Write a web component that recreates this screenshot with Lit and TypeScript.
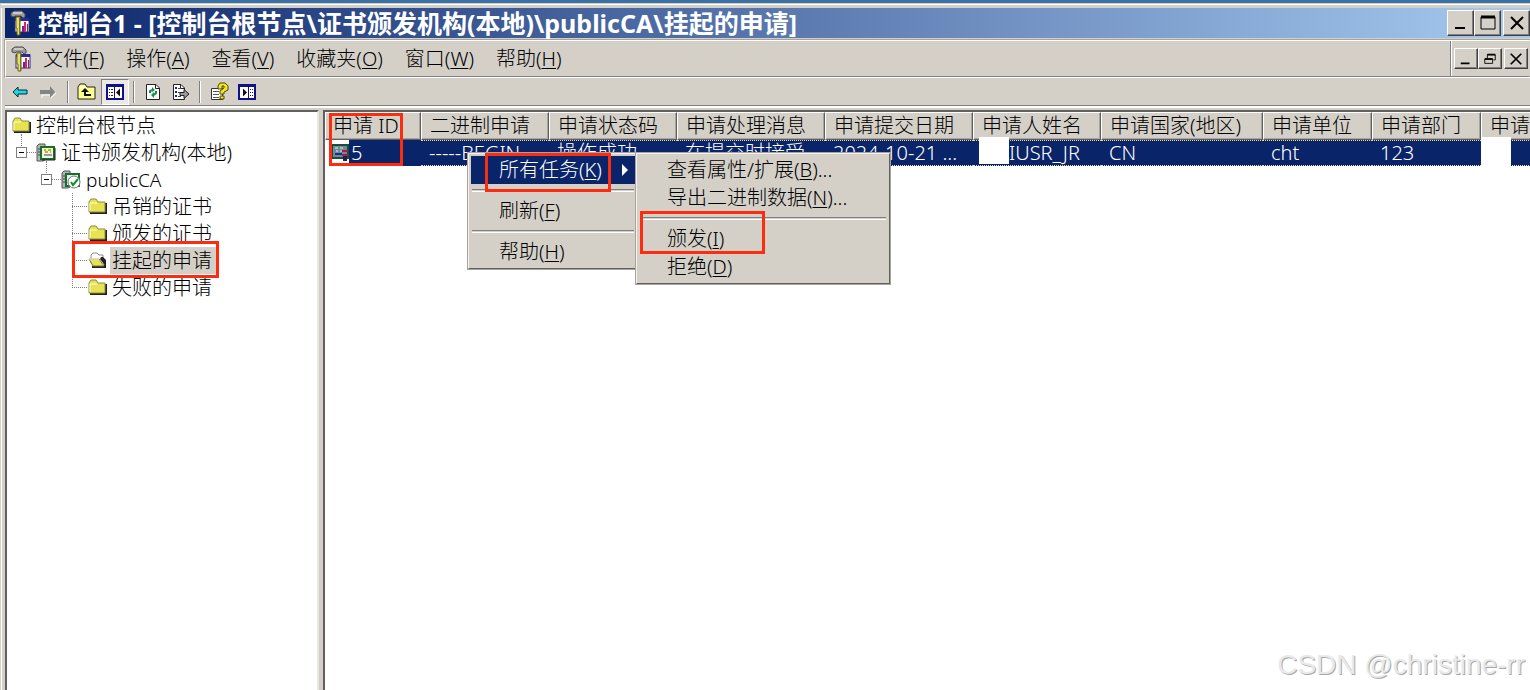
import { LitElement, html, css, svg, nothing } from "lit";
import { customElement, property } from "lit/decorators.js";

const icon = (w: number, h: number, body: unknown) => html`
  <svg class="icon" width=${w} height=${h} viewBox="0 0 ${w} ${h}" aria-hidden="true">${body}</svg>
`;

const consoleIcon = () => icon(20, 26, svg`
  <rect x="5" y="9" width="14" height="13" fill="#fff" stroke="#2a2a6c"/>
  <rect x="5" y="8" width="14" height="3" fill="#2a2a9c"/>
  <path d="M12 16h2v6h-2zM17 14h1v8h-1z" fill="#7a1f9c"/>
  <path d="M14 12h2v10h-2z" fill="#d22a5c"/>
  <path d="M6 7h4v18H7V18H6z" fill="#e8e060" stroke="#66641c"/>
  <path d="M9 8h1v17H9z" fill="#77752c"/>
  <path d="M1 3L4 1H12L15 4V7L13 8L11 6H5L4 7L1 6Z" fill="#9c9c9c" stroke="#4e4e4e"/>
  <path d="M3 3h9" stroke="#f8f8f8"/>
`);

const backIcon = () => icon(16, 12, svg`
  <path d="M1 6L6 1V4H15V8H6V11Z" fill="#1fd6de" stroke="#062a3c"/>
`);

const forwardIcon = () => icon(16, 12, svg`
  <path d="M16 7L11 12V9H2V13" fill="none" stroke="#fff"/>
  <path d="M15 6L10 0V4H0V8H10V12Z" fill="#848484"/>
`);

const upFolderIcon = () => icon(20, 18, svg`
  <path d="M1 16V4L3 1H8L10 4H18V16Z" fill="#ffff8c" stroke="#222"/>
  <path d="M2 4H9" stroke="#fff"/>
  <path d="M8 8V12H14" fill="none" stroke="#111" stroke-width="2"/>
  <path d="M4 9L8 5L12 9Z" fill="#111"/>
`);

const paneFrame = svg`
  <rect x="1" y="1" width="16" height="14" fill="#fff" stroke="#10108c" stroke-width="2"/>
  <path d="M1 2H17" stroke="#10108c" stroke-width="2"/>
`;

const treePaneIcon = () => icon(18, 16, svg`
  ${paneFrame}
  <path d="M8.500 3V14" stroke="#10108c"/>
  <path d="M3 5.500h1M5 5.500h2M3 8.500h1M5 8.500h2M3 11.500h1M5 11.500h2" stroke="#222"/>
  <path d="M10 8.500L14 4.500V12.500Z" fill="#111"/>
`);

const actionPaneIcon = () => icon(18, 16, svg`
  ${paneFrame}
  <path d="M10.500 3V14" stroke="#10108c"/>
  <path d="M12 5.500h1M14 5.500h1M12 8.500h1M14 8.500h1M12 11.500h1M14 11.500h1" stroke="#222"/>
  <path d="M9 8.500L5 4.500V12.500Z" fill="#111"/>
`);

const refreshIcon = () => icon(16, 18, svg`
  <path d="M1.500 1.500H11L14.500 5V16.500H1.500Z" fill="#fff" stroke="#222"/>
  <path d="M10.500 1.500V5.500H14.500" fill="none" stroke="#222"/>
  <path d="M5 10V8L7 7M11 8V10L9 12" fill="none" stroke="#16904c" stroke-width="2"/>
  <path d="M7 4L10 7L7 9ZM9 9L6 12L9 15Z" fill="#16904c"/>
`);

const exportIcon = () => icon(18, 18, svg`
  <path d="M1.500 1.500H9L12.500 5V16.500H1.500Z" fill="#fff" stroke="#222"/>
  <path d="M8.500 1.500V5.500H12.500" fill="none" stroke="#222"/>
  <path d="M3 5h2M3 9h2M3 13h2" stroke="#2020a0" stroke-width="2"/>
  <path d="M6 5.500h2M6 9.500h3M6 13.500h3" stroke="#444"/>
  <path d="M8 9.500H12V6.500L17 11L12 15.500V12.500H8Z" fill="#9a9a9a" stroke="#222"/>
`);

const helpIcon = () => icon(19, 20, svg`
  <path d="M1.500 6.500H12.500V17.500H1.500Z" fill="#fff" stroke="#333"/>
  <path d="M3 9.500h6M3 12.500h6M3 15.500h6" stroke="#555"/>
  <path d="M8 7V4L10 1H15L18 4V8L14 10V12H10V9L14 6V4H12V7Z" fill="#f2e61c" stroke="#4e4a08"/>
  <path d="M10 14h4v3h-4z" fill="#f2e61c" stroke="#4e4a08"/>
`);

const folderIcon = () => icon(19, 17, svg`
  <path d="M2 15H18V5" fill="none" stroke="#222" stroke-width="2"/>
  <path d="M1 14V4L3 1H8L10 4H17V14Z" fill="#e6e252" stroke="#8c8a48"/>
  <path d="M2 13V5H9" fill="none" stroke="#ffffd0"/>
`);

const openFolderIcon = () => icon(19, 17, svg`
  <path d="M3 11V3L5 1H9L11 3H15V7" fill="#fff" stroke="#8c8c8c"/>
  <path d="M4 15H17V13" fill="none" stroke="#222" stroke-width="2"/>
  <path d="M1 7H11L16 14H5Z" fill="#e6e252" stroke="#77753c"/>
  <path d="M1 7H11" stroke="#fff"/>
  <path d="M13 5H15L18 8V15L12 7Z" fill="#222"/>
`);

const server = svg`
  <path d="M1 3L3 1H9V17L7 18H1Z" fill="#b4b4b4" stroke="#555"/>
  <path d="M2 6h4M2 9h4M2 12h4" stroke="#444"/>
`;

const authorityIcon = () => icon(20, 19, svg`
  ${server}
  <rect x="5" y="4" width="13" height="12" fill="#f4f4d8" stroke="#14702c" stroke-width="2"/>
  <path d="M8 7h2M12 7h3M9 9h3M14 9h1" stroke="#c8b414" stroke-width="2"/>
  <path d="M8 12h8" stroke="#2040b0"/>
  <path d="M19 5V17H6" fill="none" stroke="#222"/>
`);

const publicCaIcon = () => icon(20, 20, svg`
  ${server}
  <rect x="5" y="4" width="13" height="12" fill="#e8f0e8" stroke="#14702c" stroke-width="2"/>
  <circle cx="13" cy="12" r="6" fill="#fff" stroke="#777"/>
  <path d="M10 12L12 15L17 9" fill="none" stroke="#109030" stroke-width="2"/>
`);

const requestIcon = () => icon(18, 18, svg`
  <rect x="1" y="1" width="16" height="13" fill="#6c8c98" stroke="#1c4c3c" stroke-width="2"/>
  <path d="M4 4h3M9 4h3M5 7h2M9 7h2" stroke="#e8e8f4"/>
  <path d="M4 10h7" stroke="#28288c" stroke-width="2"/>
  <path d="M11 7h6M11 11h6" stroke="#a81c4c" stroke-width="2"/>
  <path d="M12 12h4v5h-4z" fill="#20204c"/>
`);

const glyphs: Record<string, unknown> = {
  minimize: svg`<path d="M2 13h10" stroke="#000" stroke-width="2"/>`,
  maximize: svg`<path d="M1 2h14v12H1z" fill="none" stroke="#000"/><path d="M1 2h14" stroke="#000" stroke-width="3"/>`,
  restore: svg`<path d="M5 7V3h9v6h-2" fill="none" stroke="#000"/><path d="M5 3h9" stroke="#000" stroke-width="2"/>
    <path d="M2 8h9v5H2z" fill="none" stroke="#000"/><path d="M2 8h9" stroke="#000" stroke-width="2"/>`,
  close: svg`<path d="M2 2L14 14M14 2L2 14" stroke="#000" stroke-width="2"/>`,
};

/** A classic raised caption button: minimise, maximise, restore or close. */
@customElement("caption-button")
class CaptionButton extends LitElement {
  @property() kind = "close";
  @property() label = "";
  @property({ type: Boolean, reflect: true }) small = false;

  static styles = css`
    :host { display: block; width: 27px; height: 26px; }
    :host([small]) { width: 24px; height: 21px; }
    button {
      display: grid;
      place-items: center;
      box-sizing: border-box;
      width: 100%;
      height: 100%;
      padding: 0;
      border: 1px solid;
      border-color: #fff #404040 #404040 #fff;
      background: #d4d0c8;
      box-shadow: inset -1px -1px #808080;
    }
    svg { width: 16px; height: 16px; }
    :host([small]) svg { width: 14px; height: 14px; }
  `;

  render() {
    return html`<button aria-label=${this.label}>
      <svg viewBox="0 0 16 16" aria-hidden="true">${glyphs[this.kind]}</svg>
    </button>`;
  }
}

interface MenuItem {
  text: string;
  key: string;
  tail?: string;
  active?: boolean;
  marked?: boolean;
}

@customElement("popup-menu")
class PopupMenu extends LitElement {
  @property({ attribute: false }) items: (MenuItem | null)[] = [];

  static styles = css`
    :host {
      display: block;
      box-sizing: border-box;
      padding: 2px;
      border: 2px solid;
      border-color: #f4f2ee #606060 #606060 #f4f2ee;
      background: #d4d0c8;
      outline: 1px solid #a8a49c;
      outline-offset: -1px;
    }
    button {
      position: relative;
      display: flex;
      align-items: center;
      justify-content: space-between;
      width: 100%;
      height: 28px;
      padding: 0 6px 0 28px;
      border: 0;
      background: none;
      color: #000;
      font: inherit;
      line-height: 28px;
      text-align: left;
      white-space: nowrap;
    }
    button.active { background: #0a246a; color: #fff; }
    u { text-decoration-thickness: 1px; text-underline-offset: 2px; }
    hr {
      height: 1px;
      margin: 5px 1px;
      border: 0;
      border-top: 1px solid #808080;
      border-bottom: 1px solid #fff;
      background: none;
    }
    .mark {
      position: absolute;
      inset: -3px 24px -8px 14px;
      border: 3px solid #fb2c10;
      pointer-events: none;
    }
    .mark.wide { inset: -14px 122px -1px 1px; }
  `;

  render() {
    return this.items.map((item) => item === null ? html`<hr>` : html`
      <button role="menuitem" class=${item.active ? "active" : ""}>
        <span>${item.text}(<u>${item.key}</u>)${item.tail ?? ""}</span>
        ${item.active ? html`<svg width="8" height="12" viewBox="0 0 8 12" aria-hidden="true"><path d="M1 0L7 6L1 12Z" fill="#fff"/></svg>` : nothing}
        ${item.marked ? html`<span class="mark ${item.active ? "" : "wide"}"></span>` : nothing}
      </button>`);
  }
}

const MENUS = [["文件", "F"], ["操作", "A"], ["查看", "V"], ["收藏夹", "O"], ["窗口", "W"], ["帮助", "H"]];

const TOOLS = [
  { label: "后退", draw: backIcon },
  { label: "前进", draw: forwardIcon },
  null,
  { label: "上一级", draw: upFolderIcon },
  { label: "显示/隐藏控制台树", draw: treePaneIcon, pressed: true },
  null,
  { label: "刷新", draw: refreshIcon },
  { label: "导出列表", draw: exportIcon },
  null,
  { label: "帮助", draw: helpIcon },
  { label: "显示/隐藏操作窗格", draw: actionPaneIcon },
];

const CONTEXT: (MenuItem | null)[] = [
  { text: "所有任务", key: "K", active: true, marked: true },
  null,
  { text: "刷新", key: "F" },
  null,
  { text: "帮助", key: "H" },
];

const TASKS: (MenuItem | null)[] = [
  { text: "查看属性/扩展", key: "B", tail: "..." },
  { text: "导出二进制数据", key: "N", tail: "..." },
  null,
  { text: "颁发", key: "I", marked: true },
  { text: "拒绝", key: "D" },
];

const COLUMNS = [
  { title: "申请 ID", value: "5", size: "c96" },
  { title: "二进制申请", value: "-----BEGIN ...", size: "c128" },
  { title: "申请状态码", value: "操作成功...", size: "c128" },
  { title: "申请处理消息", value: "在提交时接受", size: "c148" },
  { title: "申请提交日期", value: "2024-10-21 ...", size: "c148" },
  { title: "申请人姓名", value: "IUSR_JR", size: "c128", hidden: true },
  { title: "申请国家(地区)", value: "CN", size: "c162" },
  { title: "申请单位", value: "cht", size: "c109" },
  { title: "申请部门", value: "123", size: "c109" },
  { title: "申请人地址", value: "", size: "c128", hidden: true },
];

const LEAVES = ["吊销的证书", "颁发的证书", "挂起的申请", "失败的申请"];

@customElement("app-root")
class AppRoot extends LitElement {
  static styles = css`
    :host {
      display: block;
      height: 100vh;
      font: 300 20px/26px "Noto Sans", "Noto Sans CJK SC", sans-serif;
      color: #000;
    }
    .window {
      position: relative;
      display: flex;
      flex-direction: column;
      box-sizing: border-box;
      height: 100%;
      overflow: hidden;
      padding-left: 5px;
      border-top: 3px solid #3a72a6;
      background: linear-gradient(90deg, #d4d0c8 1px, #fff 1px, #fff 2px, #d4d0c8 2px);
    }
    .edge { height: 5px; flex: none; margin-left: -4px; background: linear-gradient(#d4d0c8 1px, #fff 1px, #fff 2px, #d4d0c8 2px); }
    .icon { display: block; flex: none; }
    u { text-decoration-thickness: 1px; text-underline-offset: 2px; }

    .title {
      display: flex;
      align-items: center;
      flex: none;
      height: 30px;
      padding-left: 5px;
      background: linear-gradient(90deg, #0a246a, #a6caf0);
      color: #fff;
    }
    h1 {
      flex: 1;
      min-width: 0;
      margin: 0 0 0 8px;
      font-size: 25px;
      line-height: 30px;
      font-weight: 700;
      white-space: nowrap;
    }
    .caption { display: flex; }
    .caption > :last-child { margin-left: 2px; }

    .menubar {
      display: flex;
      flex: none;
      height: 35px;
      margin-top: 2px;
      border: 1px solid;
      border-color: #fff #d4d0c8 #808080 #fff;
      outline: 1px solid #a8a49c;
      outline-offset: 0;
    }
    .menus { display: flex; align-items: center; gap: 22px; flex: 1; padding-left: 5px; }
    .menus button { padding: 0; border: 0; background: none; font: inherit; color: inherit; }
    .menus .icon { margin-right: -10px; }
    .mdi {
      display: flex;
      align-items: center;
      padding: 0 1px 0 3px;
      border-left: 1px solid #808080;
      box-shadow: inset 1px 0 #fff;
    }

    .toolbar {
      display: flex;
      align-items: center;
      flex: none;
      height: 27px;
      padding-left: 1px;
      border-top: 1px solid #fff;
      border-bottom: 1px solid #808080;
      box-shadow: 0 2px #fff;
    }
    .tool {
      display: grid;
      place-items: center;
      box-sizing: border-box;
      width: 28px;
      height: 26px;
      padding: 0;
      border: 1px solid transparent;
      background: none;
    }
    .tool.pressed { border-color: #808080 #fff #fff #808080; background: #ebe9e5; }
    .rule { box-sizing: border-box; width: 2px; height: 22px; margin: 0 4px; border-left: 1px solid #808080; border-right: 1px solid #fff; }
    .rule:nth-of-type(1) { margin-left: 5px; }

    .panes { display: grid; grid-template-columns: 314px 1fr; gap: 4px; flex: 1; min-height: 0; margin-top: 4px; }
    .pane {
      position: relative;
      min-width: 0;
      overflow: hidden;
      border: 2px solid;
      border-color: #606060 #e8e6e2 #e8e6e2 #606060;
      border-bottom: 0;
      background: #fff;
    }
    .pane.list { border-right: 0; }

    ul { margin: 0; padding: 0; list-style: none; }
    .tree { padding-left: 5px; }
    .row { position: relative; display: flex; align-items: center; height: 27px; gap: 5px; white-space: nowrap; }
    .root-kids { padding-left: 4px; }
    .branch > .row::before {
      content: "";
      position: absolute;
      left: 5px;
      top: -5px;
      height: 14px;
      border-left: 1px dotted #808080;
    }
    .expander {
      display: grid;
      place-items: center;
      box-sizing: border-box;
      width: 11px;
      height: 11px;
      padding: 0;
      border: 1px solid #808080;
      background: #fff;
    }
    .dash { width: 5px; height: 1px; background: #000; }
    .stub { width: 9px; margin: 0 -5px; border-top: 1px dotted #808080; }
    .root-kids > .branch > ul { padding-left: 25px; }
    .leaves { padding-left: 31px; }
    .leaf .row { gap: 3px; }
    .leaf .stub { width: 15px; margin: 0 -2px 0 0; }
    .leaf .row::before {
      content: "";
      position: absolute;
      left: 0;
      top: 0;
      height: 27px;
      border-left: 1px dotted #808080;
    }
    .leaf:last-child .row::before { height: 14px; }
    .name { padding: 0 2px; line-height: 27px; }
    .picked { padding-right: 6px; background: #d4d0c8; }
    .latin { font-size: 19px; }
    .mark { position: absolute; border: 3px solid #fb2c10; pointer-events: none; z-index: 1; }
    .tree-mark { inset: -6px auto -4px 0; width: 141px; }

    table { width: 1284px; table-layout: fixed; border-collapse: separate; border-spacing: 0; }
    th, td { box-sizing: border-box; padding: 0 0 0 8px; text-align: left; font-weight: inherit; white-space: nowrap; }
    th {
      height: 28px;
      line-height: 26px;
      border: 1px solid;
      border-color: #fff #606060 #606060 #fff;
      box-shadow: inset -1px -1px #a8a49c;
      background: #d4d0c8;
    }
    th:first-child { padding-left: 7px; }
    td {
      position: relative;
      height: 26px;
      line-height: 24px;
      background: #0a246a;
      color: #fff;
      border-top: 1px dotted #e8dc98;
      border-bottom: 1px dotted #e8dc98;
    }
    td.first { padding: 0 0 0 6px; border: 0; background: #fff; }
    .record { display: flex; align-items: center; }
    .record span { flex: 1; height: 26px; padding-left: 2px; line-height: 26px; background: #0a246a; }
    .blank { position: absolute; left: 6px; top: -4px; width: 30px; height: 27px; background: #fff; }
    .blank.last { left: 0; height: 29px; }
    .shift { padding-left: 28px; }
    .c96 { width: 96px; }
    .c109 { width: 109px; }
    .c128 { width: 128px; }
    .c148 { width: 148px; }
    .c162 { width: 162px; }
    .id-mark { left: 4px; top: 1px; width: 68px; height: 47px; }

    .context { position: absolute; left: 467px; top: 149px; width: 172px; }
    .tasks { position: absolute; left: 635px; top: 149px; width: 256px; }
    .signature {
      position: absolute;
      right: 5px;
      bottom: 8px;
      font: 28px/34px "Liberation Sans", sans-serif;
      color: #e9e9e9;
      text-shadow: 1px 1px #a8a8a8;
    }
  `;

  private leaf(name: string) {
    const open = name === "挂起的申请";
    return html`<li class="leaf" role="treeitem">
      <div class="row">
        <span class="stub"></span>
        ${open ? openFolderIcon() : folderIcon()}
        <span class="name ${open ? "picked" : ""}">${name}</span>
        ${open ? html`<span class="mark tree-mark"></span>` : nothing}
      </div>
    </li>`;
  }

  private expander() {
    return html`<button class="expander" aria-label="折叠"><span class="dash"></span></button><span class="stub"></span>`;
  }

  private cell(column: (typeof COLUMNS)[number], index: number) {
    if (index === 0) {
      return html`<td class="first"><div class="record">${requestIcon()}<span>${column.value}</span></div></td>`;
    }
    const last = index === COLUMNS.length - 1;
    return html`<td>
      ${column.hidden ? html`<span class="blank ${last ? "last" : ""}"></span>` : nothing}
      <span class=${column.hidden ? "shift" : ""}>${column.value}</span>
    </td>`;
  }

  render() {
    return html`
      <div class="window">
        <div class="edge"></div>
        <header class="title">
          ${consoleIcon()}
          <h1>控制台1 - [控制台根节点\\证书颁发机构(本地)\\publicCA\\挂起的申请]</h1>
          <div class="caption">
            <caption-button kind="minimize" label="最小化"></caption-button>
            <caption-button kind="maximize" label="最大化"></caption-button>
            <caption-button kind="close" label="关闭"></caption-button>
          </div>
        </header>

        <nav class="menubar">
          <div class="menus">
            ${consoleIcon()}
            ${MENUS.map(([text, key]) => html`<button>${text}(<u>${key}</u>)</button>`)}
          </div>
          <div class="mdi caption">
            <caption-button small kind="minimize" label="最小化"></caption-button>
            <caption-button small kind="restore" label="还原"></caption-button>
            <caption-button small kind="close" label="关闭"></caption-button>
          </div>
        </nav>

        <div class="toolbar" role="toolbar">
          ${TOOLS.map((tool) => tool === null
            ? html`<span class="rule"></span>`
            : html`<button class="tool ${tool.pressed ? "pressed" : ""}" aria-label=${tool.label}>${tool.draw()}</button>`)}
        </div>

        <main class="panes">
          <section class="pane">
            <ul class="tree" role="tree">
              <li role="treeitem">
                <div class="row">${folderIcon()}<span>控制台根节点</span></div>
                <ul class="root-kids">
                  <li class="branch" role="treeitem">
                    <div class="row">${this.expander()}${authorityIcon()}<span>证书颁发机构(本地)</span></div>
                    <ul>
                      <li class="branch" role="treeitem">
                        <div class="row">${this.expander()}${publicCaIcon()}<span class="latin">publicCA</span></div>
                        <ul class="leaves">${LEAVES.map((name) => this.leaf(name))}</ul>
                      </li>
                    </ul>
                  </li>
                </ul>
              </li>
            </ul>
          </section>

          <section class="pane list">
            <table>
              <thead><tr>${COLUMNS.map((c) => html`<th class=${c.size}>${c.title}</th>`)}</tr></thead>
              <tbody><tr>${COLUMNS.map((c, i) => this.cell(c, i))}</tr></tbody>
            </table>
            <span class="mark id-mark"></span>
          </section>
        </main>

        <popup-menu class="context" role="menu" .items=${CONTEXT}></popup-menu>
        <popup-menu class="tasks" role="menu" .items=${TASKS}></popup-menu>
        <div class="signature">CSDN @christine-rr</div>
      </div>
    `;
  }
}
